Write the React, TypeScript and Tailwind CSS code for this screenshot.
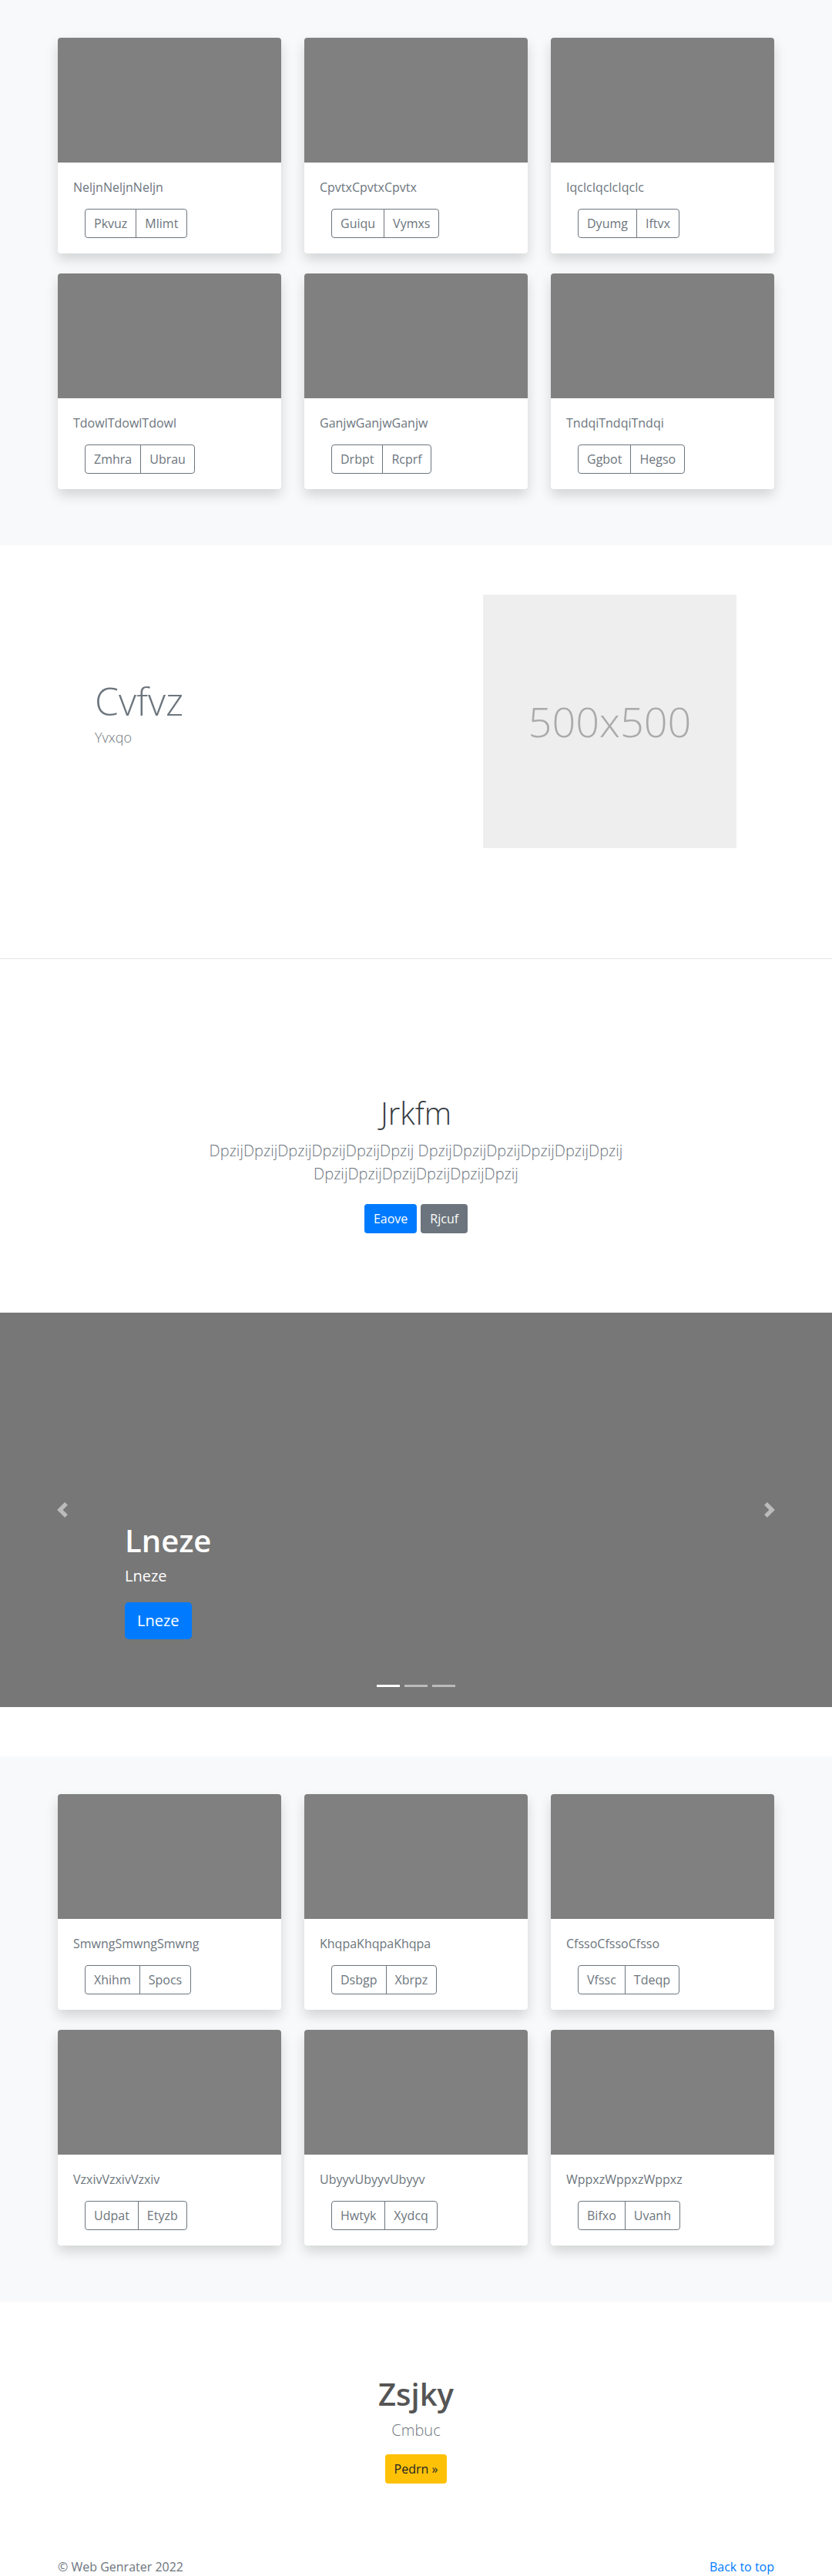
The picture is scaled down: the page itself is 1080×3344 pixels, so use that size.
import React from "react";

type Card = { title: string; a: string; b: string };

const albumOne: Card[] = [
  { title: "NeljnNeljnNeljn", a: "Pkvuz", b: "Mlimt" },
  { title: "CpvtxCpvtxCpvtx", a: "Guiqu", b: "Vymxs" },
  { title: "IqclcIqclcIqclc", a: "Dyumg", b: "Iftvx" },
  { title: "TdowlTdowlTdowl", a: "Zmhra", b: "Ubrau" },
  { title: "GanjwGanjwGanjw", a: "Drbpt", b: "Rcprf" },
  { title: "TndqiTndqiTndqi", a: "Ggbot", b: "Hegso" },
];

const albumTwo: Card[] = [
  { title: "SmwngSmwngSmwng", a: "Xhihm", b: "Spocs" },
  { title: "KhqpaKhqpaKhqpa", a: "Dsbgp", b: "Xbrpz" },
  { title: "CfssoCfssoCfsso", a: "Vfssc", b: "Tdeqp" },
  { title: "VzxivVzxivVzxiv", a: "Udpat", b: "Etyzb" },
  { title: "UbyyvUbyyvUbyyv", a: "Hwtyk", b: "Xydcq" },
  { title: "WppxzWppxzWppxz", a: "Bifxo", b: "Uvanh" },
];

const AlbumCard = ({ card }: { card: Card }) => (
  <div className="bg-white rounded-[4px] overflow-hidden shadow-[0_8px_16px_rgba(0,0,0,0.15)]">
    <div className="h-[162px] bg-[#808080]" />
    <div className="p-[20px]">
      <p className="text-[16px] leading-[24px] text-[#6c757d] mb-[16px]">
        {card.title}
      </p>
      <div className="flex ml-[15px]">
        <button className="h-[38px] px-[11px] text-[16px] text-[#6c757d] border border-[#6c757d] rounded-l-[4px]">
          {card.a}
        </button>
        <button className="h-[38px] px-[11px] text-[16px] text-[#6c757d] border border-[#6c757d] -ml-px rounded-r-[4px]">
          {card.b}
        </button>
      </div>
    </div>
  </div>
);

const Album = ({ cards }: { cards: Card[] }) => (
  <section className="bg-[#f8f9fa] pt-[49px] pb-[73px]">
    <div className="w-[960px] mx-auto px-[15px] grid grid-cols-3 gap-x-[30px] gap-y-[26px]">
      {cards.map((c) => (
        <AlbumCard key={c.title} card={c} />
      ))}
    </div>
  </section>
);

const Featurette = () => (
  <section className="pt-[64px]">
    <div className="w-[960px] mx-auto px-[15px] flex items-start">
      <div className="flex-1 pl-[48px] pt-[113px]">
        <h2 className="text-[50px] leading-[50px] font-light text-[#6c757d] mb-[9px]">
          Cvfvz
        </h2>
        <p className="text-[18px] leading-[27px] font-light text-[#6c757d]">Yvxqo</p>
      </div>
      <div className="w-[329px] h-[329px] mr-[49px] bg-[#eeeeee] flex items-center justify-center">
        <span className="text-[54px] font-light text-[#aaaaaa]">500x500</span>
      </div>
    </div>
    <hr className="mt-[143px] border-0 border-t border-[#e6e6e6]" />
  </section>
);

const Jumbotron = () => (
  <section className="pt-[176px] pb-[95px] text-center">
    <h1 className="text-[40px] leading-[48px] font-light text-[#343a40] mb-[10px]">
      Jrkfm
    </h1>
    <p className="w-[610px] mx-auto text-[20px] leading-[30px] font-light text-[#6c757d] mb-[16px]">
      DpzijDpzijDpzijDpzijDpzijDpzij DpzijDpzijDpzijDpzijDpzijDpzij
      DpzijDpzijDpzijDpzijDpzijDpzij
    </p>
    <div className="flex justify-center gap-[5px] py-[8px]">
      <button className="h-[38px] px-[12px] text-[16px] text-white bg-[#007bff] rounded-[4px]">
        Eaove
      </button>
      <button className="h-[38px] px-[12px] text-[16px] text-white bg-[#6c757d] rounded-[4px]">
        Rjcuf
      </button>
    </div>
  </section>
);

const Carousel = () => (
  <section className="relative h-[512px] bg-[#777777] mb-[64px]">
    <div className="absolute left-0 top-0 h-full w-[162px] flex items-center justify-center opacity-50">
      <svg width="20" height="20" viewBox="0 0 8 8" fill="#fff">
        <path d="M5.25 0l-4 4 4 4 1.5-1.5L4.25 4l2.5-2.5L5.25 0z" />
      </svg>
    </div>
    <div className="absolute right-0 top-0 h-full w-[162px] flex items-center justify-center opacity-50">
      <svg width="20" height="20" viewBox="0 0 8 8" fill="#fff">
        <path d="M2.75 0l-1.5 1.5L3.75 4l-2.5 2.5L2.75 8l4-4-4-4z" />
      </svg>
    </div>
    <div className="absolute left-[162px] top-[272px] text-white">
      <h1 className="text-[40px] leading-[48px] font-semibold mb-[8px]">Lneze</h1>
      <p className="text-[20px] leading-[28px] mb-[20px]">Lneze</p>
      <button className="h-[48px] px-[16px] text-[20px] text-white bg-[#007bff] rounded-[5px]">
        Lneze
      </button>
    </div>
    <div className="absolute left-0 right-0 bottom-[26px] flex justify-center gap-[6px]">
      <span className="w-[30px] h-[3px] bg-white" />
      <span className="w-[30px] h-[3px] bg-white opacity-50" />
      <span className="w-[30px] h-[3px] bg-white opacity-50" />
    </div>
  </section>
);

const Callout = () => (
  <section className="pt-[96px] pb-[97px] text-center">
    <h2 className="text-[40px] leading-[48px] font-semibold text-[#555555] mb-[8px]">
      Zsjky
    </h2>
    <p className="text-[20px] leading-[30px] font-light text-[#6c757d] mb-[16px]">
      Cmbuc
    </p>
    <button className="h-[38px] px-[12px] text-[16px] text-[#212529] bg-[#ffc107] rounded-[4px]">
      Pedrn »
    </button>
  </section>
);

export default function App() {
  return (
    <div className="bg-white font-['Segoe_UI','Open_Sans',sans-serif]">
      <Album cards={albumOne} />
      <Featurette />
      <Jumbotron />
      <Carousel />
      <Album cards={albumTwo} />
      <Callout />
      <footer className="w-[960px] mx-auto px-[15px] flex justify-between text-[16px] leading-[22px]">
        <p className="text-[#6c757d]">© Web Genrater 2022</p>
        <a href="#" className="text-[#007bff]">
          Back to top
        </a>
      </footer>
    </div>
  );
}
